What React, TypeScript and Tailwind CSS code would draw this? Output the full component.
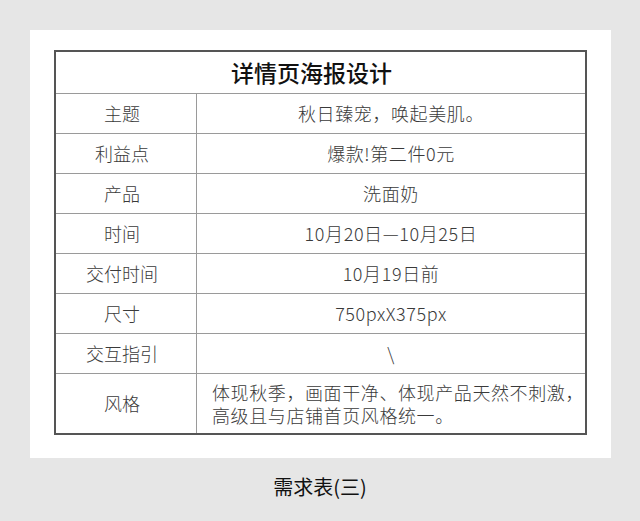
import React from "react";

const rows: [string, React.ReactNode][] = [
  ["主题", "秋日臻宠，唤起美肌。"],
  ["利益点", "爆款!第二件0元"],
  ["产品", "洗面奶"],
  ["时间", "10月20日—10月25日"],
  ["交付时间", "10月19日前"],
  ["尺寸", "750pxX375px"],
  ["交互指引", "\\"],
];

export default function App() {
  return (
    <div
      className="w-[640px] h-[521px] bg-[#e6e6e6] pt-[30px] text-[#3a3a3a]"
      style={{ fontFamily: '"Noto Sans CJK SC", "Noto Sans", sans-serif' }}
    >
      <div className="ml-[30px] w-[581px] h-[428px] bg-white pt-[20px] pl-[24px]">
        <div className="w-[533px] border-2 border-[#555]">
          <div className="h-[42px] border-b border-[#9a9a9a] flex items-center justify-center pr-[18px] text-[23px] font-medium text-[#111]">
            详情页海报设计
          </div>
          {rows.map(([k, v]) => (
            <div key={k} className="flex h-[40px] border-b border-[#9a9a9a] text-[18px] font-light tracking-[0.6px]">
              <div className="w-[141px] border-r border-[#9a9a9a] flex items-center justify-center pr-[8px] tracking-[0px]">{k}</div>
              <div className="flex-1 flex items-center justify-center">{v}</div>
            </div>
          ))}
          <div className="flex h-[59px] text-[18px] font-light tracking-[0.6px]">
            <div className="w-[141px] border-r border-[#9a9a9a] flex items-center justify-center pr-[8px] tracking-[0px]">风格</div>
            <div className="flex-1 flex items-center pl-[15px] leading-[23px]">
              <div>
                体现秋季，画面干净、体现产品天然不刺激，
                <br />
                高级且与店铺首页风格统一。
              </div>
            </div>
          </div>
        </div>
      </div>
      <div className="mt-[15px] text-center text-[20px] text-[#111] leading-[28px]">需求表(三)</div>
    </div>
  );
}
